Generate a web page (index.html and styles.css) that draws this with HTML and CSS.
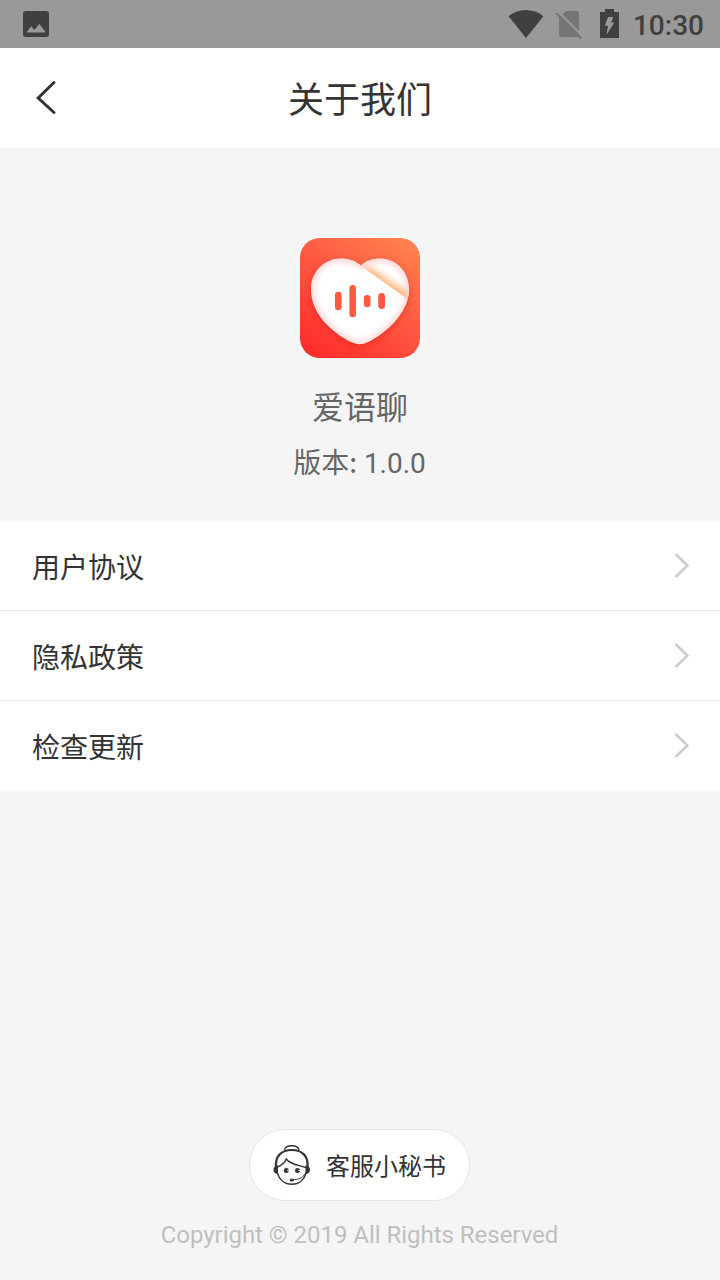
FILE: index.html
```html
<!DOCTYPE html>
<html lang="zh-CN">
<head>
    <meta charset="UTF-8">
    <title>关于我们</title>
    <link rel="stylesheet" href="styles.css">
</head>
<body>
    <div class="status-bar">
        <svg class="icon-photo" width="26" height="26" viewBox="0 0 26 26">
            <path fill="#404040" fill-rule="evenodd" d="M3 0H23a3 3 0 0 1 3 3V23a3 3 0 0 1-3 3H3a3 3 0 0 1-3-3V3a3 3 0 0 1 3-3ZM3.3 21.5H23L16.300 13L11.300 19L8.300 15.200Z"/>
        </svg>
        <div class="status-right">
            <svg class="icon-wifi" width="36" height="28" viewBox="0 0 36 28">
                <path fill="#404040" d="M0.600 6.300C10.500-2.100 25.500-2.100 35.400 6.300L18 28Z"/>
            </svg>
            <svg class="icon-sim" width="28" height="30" viewBox="0 0 28 30">
                <path fill="#757575" d="M11 2H21.500a2.500 2.500 0 0 1 2.500 2.500V25.500a2.500 2.500 0 0 1-2.500 2.500H6.500a2.500 2.500 0 0 1-2.500-2.500V9Z"/>
                <path stroke="#999" stroke-width="2" d="M2.800 2L27.500 27"/>
                <path stroke="#757575" stroke-width="2.200" d="M1.200 4.200L26.200 29.300"/>
            </svg>
            <svg class="icon-battery" width="19" height="29" viewBox="0 0 19 29">
                <path fill="#404040" d="M5 0H14V3H19V29H0V3H5Z"/>
                <path fill="#999" d="M8 8H13.300L11 13.500H14.200L6.500 26L8 16.800H4.800Z"/>
            </svg>
            <span class="time">10:30</span>
        </div>
    </div>

    <div class="header">
        <svg class="back" width="22" height="36" viewBox="0 0 22 36">
            <path d="M19 2.500L3.200 18L19 32.500"/>
        </svg>
        <h1 class="title">关于我们</h1>
    </div>

    <div class="about">
        <svg class="logo" width="120" height="120" viewBox="0 0 120 120">
            <defs>
                <linearGradient id="bg" x1="0.15" y1="1" x2="0.85" y2="0">
                    <stop offset="0" stop-color="#ff2c2c"/>
                    <stop offset="0.5" stop-color="#ff5540"/>
                    <stop offset="1" stop-color="#ff8050"/>
                </linearGradient>
                <linearGradient id="fold" gradientUnits="userSpaceOnUse" x1="83" y1="45" x2="91" y2="33">
                    <stop offset="0" stop-color="#ffb078"/>
                    <stop offset="0.45" stop-color="#ffdfc8"/>
                    <stop offset="1" stop-color="#fff" stop-opacity="0"/>
                </linearGradient>
                <linearGradient id="foldFade" gradientUnits="userSpaceOnUse" x1="61" y1="28" x2="107" y2="61">
                    <stop offset="0" stop-color="#fff" stop-opacity="0.7"/>
                    <stop offset="0.2" stop-color="#fff" stop-opacity="0"/>
                    <stop offset="0.85" stop-color="#fff" stop-opacity="0"/>
                    <stop offset="1" stop-color="#fff" stop-opacity="0.3"/>
                </linearGradient>
                <path id="heart" d="M61 27.500C67 22.500 73 20.500 80 20.500C97 20.500 109 34.500 109 51C109 76 85 95 69.500 103.500Q60 108.500 51 104C35 96 11 78 11 51C11 34 24 20.500 41 20.500C49 20.500 55.500 23 61 27.500Z"/>
                <clipPath id="heartClip"><use href="#heart"/></clipPath>
                <filter id="soft" x="-20%" y="-20%" width="140%" height="140%"><feGaussianBlur stdDeviation="3"/></filter>
            </defs>
            <rect width="120" height="120" rx="20" fill="url(#bg)"/>
            <use href="#heart" transform="translate(0 3)" fill="#c81c10" opacity="0.42" filter="url(#soft)"/>
            <use href="#heart" fill="#fff"/>
            <g clip-path="url(#heartClip)">
                <path fill="url(#fold)" d="M61 28L109 62V15H61Z"/>
                <path fill="url(#foldFade)" d="M61 28L109 62V15H61Z"/>
                <use href="#heart" fill="none" stroke="#ffb8b5" stroke-width="5" opacity="0.75" filter="url(#soft)"/>
            </g>
            <g fill="#ff5a41">
                <rect x="35" y="53.800" width="6.600" height="18.500" rx="3.300"/>
                <rect x="49.400" y="47" width="6.600" height="32.300" rx="3.300"/>
                <rect x="63.900" y="57" width="6.600" height="12.300" rx="3.300"/>
                <rect x="78.200" y="55" width="6.800" height="16" rx="3.400"/>
            </g>
        </svg>
        <p class="name">爱语聊</p>
        <p class="version"><span class="label">版本:</span> 1.0.0</p>
    </div>

    <div class="list">
        <div class="item">
            <span>用户协议</span>
            <svg class="arrow" width="16" height="26" viewBox="0 0 16 26"><path d="M1.500 1L13.500 12.500L1.500 24"/></svg>
        </div>
        <div class="item">
            <span>隐私政策</span>
            <svg class="arrow" width="16" height="26" viewBox="0 0 16 26"><path d="M1.500 1L13.500 12.500L1.500 24"/></svg>
        </div>
        <div class="item">
            <span>检查更新</span>
            <svg class="arrow" width="16" height="26" viewBox="0 0 16 26"><path d="M1.500 1L13.500 12.500L1.500 24"/></svg>
        </div>
    </div>

    <div class="footer">
        <button class="service">
            <svg class="icon-service" width="38" height="42" viewBox="0 0 38 42">
                <g fill="none" stroke="#333" stroke-width="1.400">
                    <path d="M11.500 6C12 3 15 1.700 18.800 1.700S25.500 3 26 6"/>
                    <path d="M4 28C6 35.500 11.500 40.300 18.800 40.300S31.500 35.500 33.500 28"/>
                    <path d="M4.500 23C9 21 12 18.500 13.300 15C17 20.500 25 21 33 23.500"/>
                    <path stroke-width="1" d="M32 30C29.500 34 25 35.800 19 35.800"/>
                </g>
                <path fill="none" stroke="#333" stroke-width="2.200" d="M3 23C2 12 8.500 6 18.800 6S35.500 12 34.500 23"/>
                <path fill="#333" d="M5 21.500V30C2 30 0.500 28.500 0.500 25.800S2 21.500 5 21.500ZM32.500 21.500V30C35.500 30 37 28.500 37 25.800S35.500 21.500 32.500 21.500Z"/>
                <circle cx="13.300" cy="26.500" r="2.500" fill="#333"/>
                <circle cx="24.500" cy="26.500" r="2.500" fill="#333"/>
                <path stroke="#fff" stroke-width="0.800" d="M14 26.500H16.500M25.200 26.500H27.500"/>
                <ellipse cx="18.800" cy="36" rx="2.200" ry="1.500" fill="#333"/>
            </svg>
            <span>客服小秘书</span>
        </button>
        <p class="copyright">Copyright © 2019 All Rights Reserved</p>
    </div>
</body>
</html>
```

FILE: styles.css
```css
* {
    box-sizing: border-box;
}

body {
    display: flex;
    flex-direction: column;
    height: 1280px;
    margin: 0;
    font-family: Roboto, "Noto Sans CJK SC", sans-serif;
    color: #333;
    background-color: #f5f5f5;
}

h1, p {
    margin: 0;
    font-weight: 400;
}

svg {
    display: block;
    flex: none;
}

.status-bar {
    display: flex;
    align-items: center;
    justify-content: space-between;
    height: 48px;
    padding: 0 16px 0 23px;
    background-color: #999;
}

.status-right {
    display: flex;
    align-items: center;
}

.icon-sim {
    margin-left: 11px;
}

.icon-battery {
    margin-left: 17px;
    margin-bottom: 1px;
}

.time {
    margin-left: 14px;
    padding-top: 4px;
    font-size: 28px;
    font-weight: 500;
    line-height: 44px;
    color: #404040;
}

.header {
    display: grid;
    grid-template-columns: 60px 1fr 60px;
    align-items: center;
    height: 100px;
    background-color: #fff;
}

.back {
    margin-left: 35px;
    fill: none;
    stroke: #333;
    stroke-width: 3;
    stroke-linecap: round;
}

.title {
    padding-top: 5px;
    font-size: 36px;
    line-height: 50px;
    text-align: center;
}

.about {
    display: flex;
    flex-direction: column;
    align-items: center;
    height: 373px;
    padding-top: 90px;
    color: #666;
}

.name {
    margin-top: 26px;
    font-size: 32px;
    line-height: 48px;
}

.version {
    margin-top: 9px;
    padding-right: 1px;
    font-size: 28px;
    line-height: 40px;
}

.label {
    font-family: "Noto Sans CJK SC", sans-serif;
}

.list {
    background-color: #fff;
}

.item {
    display: flex;
    align-items: center;
    justify-content: space-between;
    height: 90px;
    padding: 0 30px 0 32px;
    font-size: 28px;
    border-bottom: 1px solid #e5e5e5;
}

.item:last-child {
    border-bottom-color: #fff;
}

.arrow {
    fill: none;
    stroke: #ccc;
    stroke-width: 2.500;
}

.footer {
    display: flex;
    flex-direction: column;
    align-items: center;
    margin-top: auto;
    padding: 0 1px 31px 0;
}

.service {
    display: flex;
    align-items: center;
    width: 221px;
    height: 72px;
    padding: 0 21px 1px 23px;
    font-family: inherit;
    font-size: 24px;
    color: #333;
    background-color: #fff;
    border: 1px solid #e5e5e5;
    border-radius: 36px;
}

.icon-service {
    margin-right: 15px;
}

.copyright {
    margin-top: 20px;
    font-size: 24px;
    line-height: 28px;
    letter-spacing: -0.030px;
    color: #bfbfbf;
}
```
